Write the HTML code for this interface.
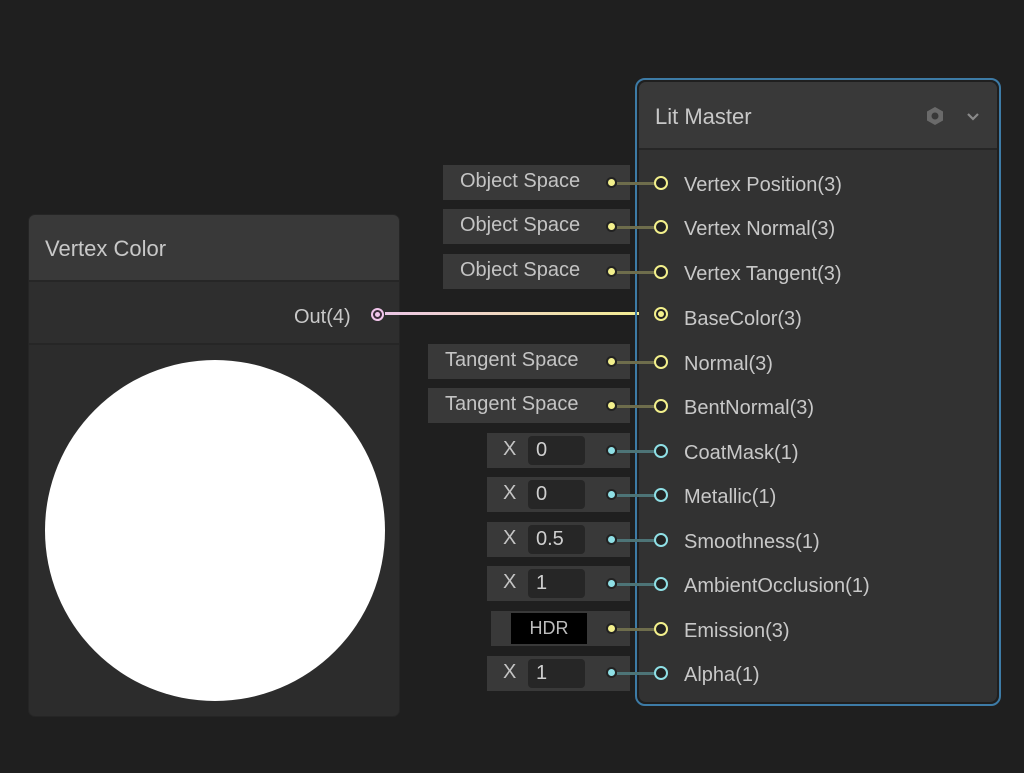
<!DOCTYPE html>
<html><head><style>
body{margin:0;width:1024px;height:773px;background:#1f1f1f;position:relative;overflow:hidden;font-family:"Liberation Sans",sans-serif;color:#c8c8c8}
div{position:absolute;box-sizing:border-box}
.in{background:#393939;height:35px;font-size:20px;color:#c4c4c4;line-height:33px}
.lab{left:684px;font-size:20px;color:#c8c8c8;line-height:22px}
.port{left:654px;width:14px;height:14px;border-radius:50%;border:2px solid #f3f08c;background:#222}
.pc{border-color:#8fe0e6}
.dot{left:606px;width:11px;height:11px;border-radius:50%;background:#f3f08c;border:2px solid #222}
.dc{background:#8fe0e6}
.wire{left:617px;width:38px;height:3px;background:#6e6d4c}
.wc{background:#4d7477}
.fld{background:#262626;border-radius:4px;height:29px;top:3px;left:41px;width:57px;padding-left:8px;line-height:29px;color:#cfcfcf}
</style></head><body>

<div style="left:28px;top:214px;width:372px;height:503px;background:#2c2c2c;border-radius:7px;overflow:hidden;border:1px solid #252525">
  <div style="left:0;top:0;width:100%;height:67px;background:#393939;border-bottom:2px solid #262626"></div>
  <div style="left:16px;top:21px;font-size:22px;color:#c8c8c8">Vertex Color</div>
  <div style="left:0;top:67px;width:100%;height:63px;background:#2e2e2e;border-bottom:2px solid #262626"></div>
  <div style="left:265px;top:91px;font-size:20px;color:#c8c8c8">Out(4)</div>
  <div style="left:342px;top:93px;width:13px;height:13px;border-radius:50%;border:2px solid #f0c4ea;background:#3a2a38"><div style="left:2px;top:2px;width:5px;height:5px;border-radius:50%;background:#f0c4ea"></div></div>
  <div style="left:16px;top:145px;width:340px;height:341px;border-radius:50%;background:#fff"></div>
</div>

<div style="left:385px;top:312px;width:272px;height:3px;background:linear-gradient(90deg,#ecc6e6,#f3ef8c)"></div>

<div style="left:635px;top:78px;width:366px;height:628px;border:2px solid #3d7ba6;border-radius:10px"></div>
<div style="left:639px;top:82px;width:358px;height:620px;background:#323232;border-radius:7px;overflow:hidden">
  <div style="left:0;top:0;width:100%;height:68px;background:#393939;border-bottom:2px solid #262626"></div>
  <div style="left:16px;top:22px;font-size:22px;color:#c8c8c8">Lit Master</div>
  <svg style="position:absolute;left:286px;top:24px" width="20" height="20" viewBox="0 0 20 20"><polygon points="10,1 18,5.5 18,14.5 10,19 2,14.5 2,5.5" fill="#6a6a6a"/><circle cx="10" cy="10" r="3.5" fill="#393939"/></svg>
  <svg style="position:absolute;left:327px;top:30px" width="14" height="10" viewBox="0 0 14 10"><path d="M2 2 L7 7 L12 2" stroke="#8a8a8a" stroke-width="2.2" fill="none"/></svg>
</div>

<div class="in" style="left:443px;top:165px;width:187px;padding-left:17px">Object Space</div>
<div class="in" style="left:443px;top:209px;width:187px;padding-left:17px">Object Space</div>
<div class="in" style="left:443px;top:254px;width:187px;padding-left:17px">Object Space</div>
<div class="in" style="left:428px;top:344px;width:202px;padding-left:17px">Tangent Space</div>
<div class="in" style="left:428px;top:388px;width:202px;padding-left:17px">Tangent Space</div>
<div class="in" style="left:487px;top:433px;width:143px;padding-left:16px">X<div class="fld">0</div></div>
<div class="in" style="left:487px;top:477px;width:143px;padding-left:16px">X<div class="fld">0</div></div>
<div class="in" style="left:487px;top:522px;width:143px;padding-left:16px">X<div class="fld">0.5</div></div>
<div class="in" style="left:487px;top:566px;width:143px;padding-left:16px">X<div class="fld">1</div></div>
<div class="in" style="left:491px;top:611px;width:139px"><div style="left:20px;top:2px;width:76px;height:31px;background:#000;color:#bdbdbd;text-align:center;line-height:31px;font-size:18px">HDR</div></div>
<div class="in" style="left:487px;top:656px;width:143px;padding-left:16px">X<div class="fld">1</div></div>

<div class="wire" style="top:182px"></div><div class="dot" style="top:177px"></div><div class="port" style="top:176px"></div><div class="lab" style="top:174px">Vertex Position(3)</div>
<div class="wire" style="top:226px"></div><div class="dot" style="top:221px"></div><div class="port" style="top:220px"></div><div class="lab" style="top:218px">Vertex Normal(3)</div>
<div class="wire" style="top:271px"></div><div class="dot" style="top:266px"></div><div class="port" style="top:265px"></div><div class="lab" style="top:263px">Vertex Tangent(3)</div>
<div class="port" style="top:307px"><div style="left:2px;top:2px;width:6px;height:6px;border-radius:50%;background:#f3f08c"></div></div><div class="lab" style="top:308px">BaseColor(3)</div>
<div class="wire" style="top:361px"></div><div class="dot" style="top:356px"></div><div class="port" style="top:355px"></div><div class="lab" style="top:353px">Normal(3)</div>
<div class="wire" style="top:405px"></div><div class="dot" style="top:400px"></div><div class="port" style="top:399px"></div><div class="lab" style="top:397px">BentNormal(3)</div>
<div class="wire wc" style="top:450px"></div><div class="dot dc" style="top:445px"></div><div class="port pc" style="top:444px"></div><div class="lab" style="top:442px">CoatMask(1)</div>
<div class="wire wc" style="top:494px"></div><div class="dot dc" style="top:489px"></div><div class="port pc" style="top:488px"></div><div class="lab" style="top:486px">Metallic(1)</div>
<div class="wire wc" style="top:539px"></div><div class="dot dc" style="top:534px"></div><div class="port pc" style="top:533px"></div><div class="lab" style="top:531px">Smoothness(1)</div>
<div class="wire wc" style="top:583px"></div><div class="dot dc" style="top:578px"></div><div class="port pc" style="top:577px"></div><div class="lab" style="top:575px">AmbientOcclusion(1)</div>
<div class="wire" style="top:628px"></div><div class="dot" style="top:623px"></div><div class="port" style="top:622px"></div><div class="lab" style="top:620px">Emission(3)</div>
<div class="wire wc" style="top:672px"></div><div class="dot dc" style="top:667px"></div><div class="port pc" style="top:666px"></div><div class="lab" style="top:664px">Alpha(1)</div>

</body></html>
